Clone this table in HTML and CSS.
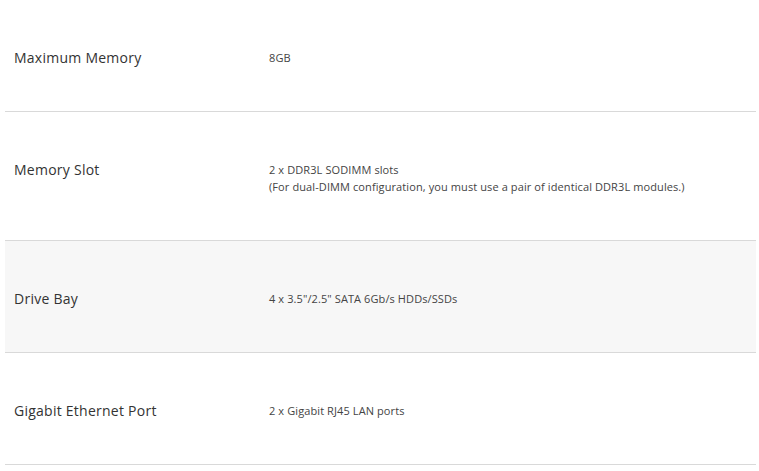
FILE: index.html
```html
<!DOCTYPE html>
<html lang="en">
<head>
<meta charset="utf-8">
<title>Specifications</title>
<link rel="stylesheet" href="styles.css">
</head>
<body>
<div class="specs">
  <div class="row">
    <div class="label">Maximum Memory</div>
    <div class="value">8GB</div>
  </div>
  <div class="row">
    <div class="label">Memory Slot</div>
    <div class="value">2 x DDR3L SODIMM slots<br>(For dual-DIMM configuration, you must use a pair of identical DDR3L modules.)</div>
  </div>
  <div class="row shaded">
    <div class="label">Drive Bay</div>
    <div class="value">4 x 3.5"/2.5" SATA 6Gb/s HDDs/SSDs</div>
  </div>
  <div class="row">
    <div class="label">Gigabit Ethernet Port</div>
    <div class="value">2 x Gigabit RJ45 LAN ports</div>
  </div>
</div>
</body>
</html>
```

FILE: styles.css
```css
html, body {
  margin: 0;
  padding: 0;
  background: #ffffff;
}

body {
  font-family: "Open Sans", "DejaVu Sans", sans-serif;
}

.specs {
  margin: 0 3px 0 5px;
}

.row {
  display: grid;
  grid-template-columns: 264px 1fr;
  align-items: start;
  padding: 49px 0 45px;
  border-bottom: 1px solid #d9d9d9;
  line-height: 17px;
}

.row.shaded {
  background: #f7f7f7;
}

.label {
  padding-left: 9px;
  font-size: 14px;
  letter-spacing: 0.25px;
  color: #333333;
}

.value {
  font-size: 11px;
  letter-spacing: 0.1px;
  color: #444444;
}
```
